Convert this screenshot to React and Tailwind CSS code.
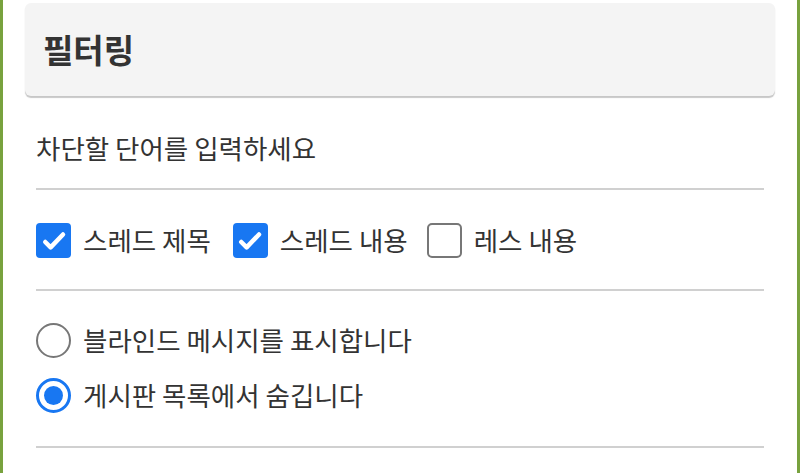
import React from "react";

function CheckBox({ checked }) {
  if (checked) {
    return (
      <div className="w-[35px] h-[35px] rounded-[4px] bg-[#1877f2] flex items-center justify-center shrink-0">
        <svg width="30" height="30" viewBox="0 0 24 24" fill="none">
          <path d="M5 12.8l4.3 4.3L19.2 6.8" stroke="white" strokeWidth="3.6" strokeLinecap="round" strokeLinejoin="round" />
        </svg>
      </div>
    );
  }
  return <div className="w-[35px] h-[35px] rounded-[5px] border-[2px] border-[#777] shrink-0" />;
}

function Radio({ checked }) {
  if (checked) {
    return (
      <div className="w-[35px] h-[35px] rounded-full border-[3px] border-[#1877f2] flex items-center justify-center shrink-0">
        <div className="w-[19px] h-[19px] rounded-full bg-[#1877f2]" />
      </div>
    );
  }
  return <div className="w-[35px] h-[35px] rounded-full border-[2px] border-[#777] shrink-0" />;
}

export default function App() {
  const font = { fontFamily: '"Noto Sans CJK KR", "Noto Sans", sans-serif' };
  return (
    <div
      className="w-[800px] h-[473px] overflow-hidden bg-white border-x-[3px] border-[#78a23e] px-[22px] pt-[3px] text-[#333]"
      style={font}
    >
      <div className="h-[93px] rounded-[6px] bg-[#f4f4f4] shadow-[0_2px_1px_rgba(0,0,0,0.22)] flex items-center pl-[18px]">
        <span className="text-[33px] font-bold leading-none">필터링</span>
      </div>
      <div className="px-[11px]">
        <div className="h-[92px] flex items-center pt-[12px] text-[26.5px] leading-none">차단할 단어를 입력하세요</div>
        <div className="h-[2px] bg-[#d0d0d0]" />
        <div className="h-[99px] flex items-center pt-[2px] text-[26.5px] leading-none">
          <div className="flex items-center gap-[12px]">
            <CheckBox checked />
            <span>스레드 제목</span>
          </div>
          <div className="flex items-center gap-[12px] ml-[22px]">
            <CheckBox checked />
            <span>스레드 내용</span>
          </div>
          <div className="flex items-center gap-[12px] ml-[19px]">
            <CheckBox checked={false} />
            <span>레스 내용</span>
          </div>
        </div>
        <div className="h-[2px] bg-[#d0d0d0]" />
        <div className="pt-[32px] pb-[33px] flex flex-col gap-[20px] text-[26.5px] leading-none">
          <div className="h-[35px] flex items-center gap-[12px]">
            <Radio checked={false} />
            <span>블라인드 메시지를 표시합니다</span>
          </div>
          <div className="h-[35px] flex items-center gap-[12px]">
            <Radio checked />
            <span>게시판 목록에서 숨깁니다</span>
          </div>
        </div>
        <div className="h-[2px] bg-[#d0d0d0]" />
      </div>
    </div>
  );
}
